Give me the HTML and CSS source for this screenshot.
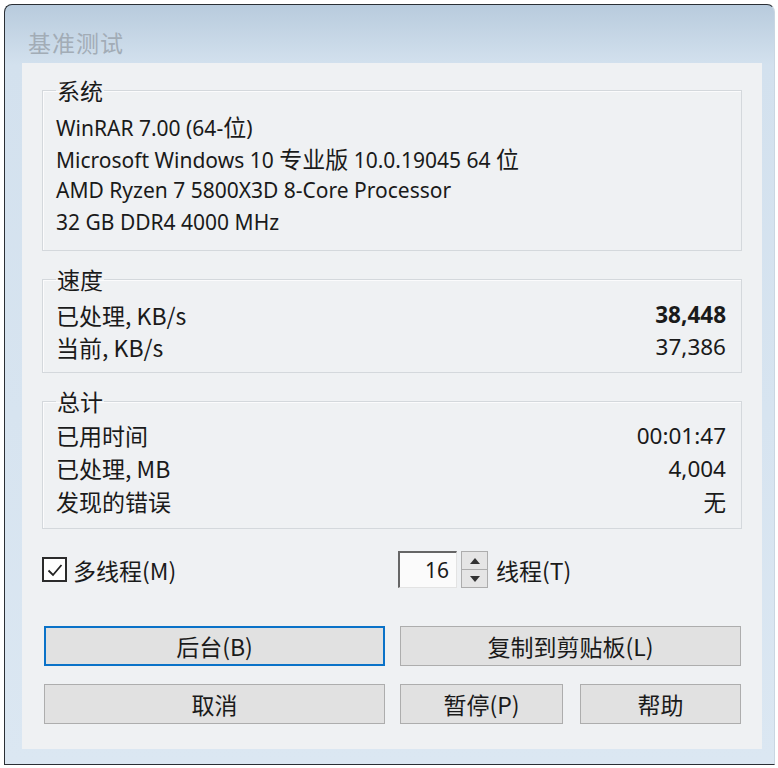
FILE: index.html
```html
<!DOCTYPE html>
<html lang="zh-CN">
<head>
<meta charset="utf-8">
<title>基准测试</title>
<link rel="stylesheet" href="styles.css">
</head>
<body>

<!-- ========== Window ========== -->
<div class="window">
  <div class="titlebar cjk">基准测试</div>

  <div class="client">
    <!-- System -->
    <fieldset class="group sys">
      <legend class="cjk">系统</legend>
      <div class="line">WinRAR 7.00 (64-<span class="cjk">位</span>)</div>
      <div class="line">Microsoft Windows 10 <span class="cjk">专业版</span> 10.0.19045 64 <span class="cjk">位</span></div>
      <div class="line">AMD Ryzen 7 5800X3D 8-Core Processor</div>
      <div class="line">32 GB DDR4 4000 MHz</div>
    </fieldset>

    <!-- Speed -->
    <fieldset class="group">
      <legend class="cjk">速度</legend>
      <div class="row"><span class="cjk">已处理, KB/s</span><span class="val bold">38,448</span></div>
      <div class="row"><span class="cjk">当前, KB/s</span><span class="val">37,386</span></div>
    </fieldset>

    <!-- Totals -->
    <fieldset class="group totals">
      <legend class="cjk">总计</legend>
      <div class="row"><span class="cjk">已用时间</span><span class="val">00:01:47</span></div>
      <div class="row"><span class="cjk">已处理, MB</span><span class="val">4,004</span></div>
      <div class="row"><span class="cjk">发现的错误</span><span class="val cjk">无</span></div>
    </fieldset>

    <!-- Options -->
    <div class="options cjk">
      <label class="check">
        <span class="box"><svg width="18" height="18" viewBox="0 0 18 18"><path d="M2.5 9.5l4.5 4.5 8.5-10" fill="none" stroke="#222" stroke-width="1.8"/></svg></span>
        多线程(M)
      </label>
      <div class="threads">
        <span class="edit">16</span>
        <span class="updown">
          <span class="arrow"><svg width="10" height="6" viewBox="0 0 10 6"><path d="M0 6L5 0 10 6z" fill="#333"/></svg></span>
          <span class="arrow"><svg width="10" height="6" viewBox="0 0 10 6"><path d="M0 0L5 6 10 0z" fill="#333"/></svg></span>
        </span>
        <span>线程(T)</span>
      </div>
    </div>

    <!-- Buttons -->
    <div class="buttons cjk">
      <button class="btn focus">后台(B)</button>
      <button class="btn wide">复制到剪贴板(L)</button>
      <button class="btn">取消</button>
      <button class="btn pause">暂停(P)</button>
      <button class="btn">帮助</button>
    </div>
  </div>
</div>

</body>
</html>
```

FILE: styles.css
```css
/* ---------- Base ---------- */
*{margin:0;padding:0;box-sizing:border-box}
html,body{background:#fff;height:100%}
body{font-family:"Noto Sans","Noto Sans CJK SC",sans-serif;font-size:21px;color:#1a1a1a;padding:4px 3px 0 4px}
.cjk{font-family:"Noto Sans CJK SC",sans-serif;font-size:23px}
/* ---------- Window frame ---------- */
.window{width:771px;height:761px;border:1px solid #2a2f35;border-right-color:#c9d6e2;border-radius:8px 8px 0 0;
  background:linear-gradient(#b8cbdd,#d3e1ee 60px,#dbe7f2);display:flex;flex-direction:column;padding:0 12px 15px 17px}
.titlebar{height:58px;line-height:74px;padding-left:6px;color:#a2acb6;letter-spacing:1px;overflow:visible}
.client{flex:1;background:#eff1f3;padding:15px 20px 0 20px}
/* ---------- Group boxes ---------- */
.group{border:1px solid #d4d8dc;box-shadow:inset 1px 1px 0 #fbfbfc;padding:8px 15px 9px 13px;margin-bottom:16px}
.group legend{padding:0 1px;line-height:24px}
.sys{padding-bottom:12px}
.line{height:32px;line-height:32px}
.row{display:flex;justify-content:space-between;align-items:center;height:32px;line-height:32px}
.totals{margin-top:3px;padding-top:6px;padding-bottom:10px}
.totals .row{height:33px;line-height:33px}
.val{font-size:22.5px}
.bold{font-weight:700}
/* ---------- Options ---------- */
.options{display:flex;align-items:center;height:37px;margin-top:22px}
.check{display:flex;align-items:center;gap:6px;width:356px}
.box{width:25px;height:25px;border:2px solid #2b2b2b;background:#fff;display:flex;align-items:center;justify-content:center}
.threads{display:flex;align-items:center}
.edit{width:59px;height:37px;background:#fbfbfb;border:2px solid #666;border-right:1px solid #e3e3e3;border-bottom:1px solid #e3e3e3;
  text-align:right;padding-right:7px;line-height:34px;font-family:"Noto Sans",sans-serif;font-size:21px}
.updown{width:27px;height:37px;margin:0 8px 0 4px;display:flex;flex-direction:column;border:1px solid #adadad}
.arrow{flex:1;display:flex;align-items:center;justify-content:center;background:#e5e5e5}
.arrow+.arrow{border-top:1px solid #adadad}
/* ---------- Buttons ---------- */
.buttons{display:grid;grid-template-columns:341px 165px 161px;grid-template-rows:40px 40px;column-gap:15px;row-gap:18px;
  margin:38px 0 0 2px}
.btn{font:inherit;color:#1a1a1a;background:#e1e1e1;border:1px solid #adadad;cursor:default}
.buttons .wide{grid-column:2/4}
.buttons .btn:nth-child(3){grid-column:1}
.buttons .pause{width:163px}
.focus{border:2px solid #0a72c8}
```
